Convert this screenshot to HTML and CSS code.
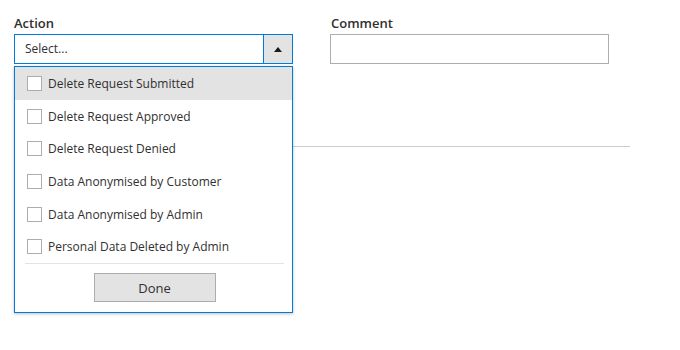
FILE: index.html
```html
<!DOCTYPE html>
<html>
<head>
<meta charset="utf-8">
<link rel="stylesheet" href="styles.css">
</head>
<body>
<div class="page">
  <div class="fields">
    <div class="field field-action">
      <label class="label">Action</label>
      <div class="select">
        <div class="select-value">Select...</div>
        <div class="select-toggle"><span class="arrow"></span></div>
      </div>
      <div class="dropdown">
        <ul class="options">
          <li class="option active"><span class="check"></span><span>Delete Request Submitted</span></li>
          <li class="option"><span class="check"></span><span>Delete Request Approved</span></li>
          <li class="option"><span class="check"></span><span>Delete Request Denied</span></li>
          <li class="option"><span class="check"></span><span>Data Anonymised by Customer</span></li>
          <li class="option"><span class="check"></span><span>Data Anonymised by Admin</span></li>
          <li class="option"><span class="check"></span><span>Personal Data Deleted by Admin</span></li>
        </ul>
        <div class="footer">
          <button class="done">Done</button>
        </div>
      </div>
    </div>
    <div class="field field-comment">
      <label class="label">Comment</label>
      <div class="input"></div>
    </div>
  </div>
  <div class="divider"></div>
</div>
</body>
</html>
```
FILE: styles.css
```css
html, body {
  margin: 0;
  padding: 0;
  background: #fff;
}
body {
  font-family: "Open Sans", "Noto Sans", sans-serif;
  color: #303030;
  min-height: 350px;
}
.page {
  padding: 13px 0 0 14px;
  min-height: 350px;
  box-sizing: border-box;
}
.fields {
  display: flex;
  gap: 37px;
}
.field {
  position: relative;
  width: 279px;
}
.label {
  display: block;
  font-size: 13px;
  font-weight: 600;
  line-height: 20px;
  margin-bottom: 1px;
  color: #303030;
}
.field-comment .label {
  padding-left: 1px;
}
.select {
  display: flex;
  height: 30px;
  box-sizing: border-box;
  border: 1px solid #007bdb;
  background: #fff;
}
.select-value {
  flex: 1;
  font-size: 12px;
  line-height: 28px;
  padding-left: 10px;
  color: #303030;
}
.select-toggle {
  width: 28px;
  border-left: 1px solid #007bdb;
  background: #e3e3e3;
  display: flex;
  align-items: center;
  justify-content: center;
}
.arrow {
  width: 0;
  height: 0;
  border-left: 4.5px solid transparent;
  border-right: 4.5px solid transparent;
  border-bottom: 5px solid #1a1a1a;
  margin-top: 1px;
}
.input {
  height: 30px;
  box-sizing: border-box;
  border: 1px solid #adadad;
  background: #fff;
}
.dropdown {
  position: absolute;
  left: 0;
  top: 53px;
  width: 279px;
  box-sizing: border-box;
  border: 1px solid #007bdb;
  background: #fff;
  box-shadow: 0 1px 3px rgba(0, 0, 0, 0.25);
  z-index: 2;
}
.options {
  list-style: none;
  margin: 0;
  padding: 0;
}
.option {
  display: flex;
  align-items: center;
  height: 32.7px;
  padding-left: 12px;
  font-size: 12px;
  color: #303030;
}
.option.active {
  background: #e3e3e3;
}
.check {
  width: 15px;
  height: 15px;
  box-sizing: border-box;
  border: 1px solid #adadad;
  background: #fff;
  margin-right: 6px;
  flex: none;
}
.footer {
  margin: 0 8px 0 10px;
  border-top: 1px solid #e3e3e3;
  padding: 9px 0 10px;
  display: flex;
  justify-content: center;
}
.done {
  width: 122px;
  height: 29px;
  box-sizing: border-box;
  border: 1px solid #adadad;
  background: #e3e3e3;
  font-family: "Open Sans", "Noto Sans", sans-serif;
  font-size: 13px;
  color: #303030;
  padding: 0;
}
.divider {
  width: 616px;
  height: 1px;
  background: #cccccc;
  margin-top: 82px;
}
```
